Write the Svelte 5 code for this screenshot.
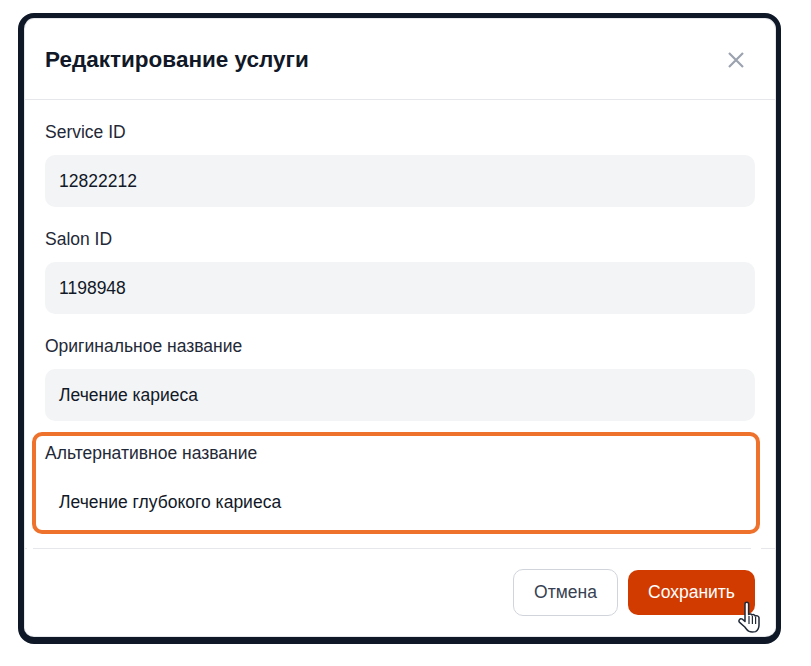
<script>
	const fields = [
		{ label: 'Service ID', value: '12822212' },
		{ label: 'Salon ID', value: '1198948' },
		{ label: 'Оригинальное название', value: 'Лечение кариеса' },
		{ label: 'Альтернативное название', value: 'Лечение глубокого кариеса', plain: true }
	];
</script>

<div class="page">
	<div class="modal">
		<header class="head">
			<h2>Редактирование услуги</h2>
			<button class="close" aria-label="Закрыть">
				<svg width="16" height="16" viewBox="0 0 16 16" fill="none" stroke="#9ca3af" stroke-width="2.2">
					<path d="M1 1L15 15M15 1L1 15" />
				</svg>
			</button>
		</header>

		<div class="body">
			{#each fields as f}
				<div class="field">
					<span class="label">{f.label}</span>
					<div class="input" class:plain={f.plain}>{f.value}</div>
				</div>
			{/each}
			<div class="highlight"></div>
		</div>

		<footer class="foot">
			<button class="btn cancel">Отмена</button>
			<button class="btn save">Сохранить</button>
			<svg class="cursor" width="23" height="32" viewBox="0 0 23 32">
				<path
					d="M7 3C7 0.6 10.6 0.6 10.6 3V13.5C11.6 12.6 13.6 12.8 14 14C15 13.2 16.8 13.6 17.2 15C18.4 14.4 20.8 14.8 21 16.6V24C21 27 19.6 29.4 17.6 30.6C15.4 31.2 12.6 31.2 10.6 30.2C9 29.2 8 27.6 6.8 26L1.6 21.4C0 19.6 1.8 16.8 4.4 18.2L7 20.4Z"
					fill="#fff"
					stroke="#1f2937"
					stroke-width="1.5"
					stroke-linejoin="round"
				/>
				<path d="M11 15V23M14.4 15V23M17.6 16V23" stroke="#1f2937" stroke-width="1.2" fill="none" />
			</svg>
		</footer>
	</div>
</div>

<style>
	:global(body) {
		margin: 0;
		background: #fff;
		font-family: 'Liberation Sans', Arial, sans-serif;
	}
	.page {
		padding: 13px 0 0 18px;
	}
	.modal {
		box-sizing: border-box;
		width: 763px;
		height: 631px;
		border: solid #0f1827;
		border-width: 5px 5px 7px 6px;
		border-radius: 16px;
		background: #fff;
		color: #111827;
		box-shadow: inset 0 0 0 1px #e5e7eb;
	}
	.head {
		display: flex;
		align-items: center;
		justify-content: space-between;
		box-sizing: border-box;
		height: 82px;
		padding: 2px 32px 0 21px;
		border-bottom: 1px solid #e5e7eb;
	}
	h2 {
		margin: 0;
		font-size: 22.5px;
		font-weight: 700;
	}
	.close {
		display: flex;
		padding: 0;
		border: 0;
		background: none;
	}
	.body {
		position: relative;
		display: flex;
		flex-direction: column;
		gap: 20px;
		padding: 20px 21px 0;
	}
	.field {
		display: flex;
		flex-direction: column;
		gap: 10px;
	}
	.label {
		font-size: 17.5px;
		line-height: 25px;
		color: #1f2937;
	}
	.input {
		display: flex;
		align-items: center;
		box-sizing: border-box;
		height: 52px;
		padding: 0 14px;
		border-radius: 10px;
		background: #f3f4f6;
		font-size: 17.5px;
	}
	.input.plain {
		background: #fff;
	}
	.highlight {
		position: absolute;
		left: 8px;
		top: 332px;
		width: 728px;
		height: 102px;
		box-sizing: border-box;
		border: 4px solid #ee722c;
		border-radius: 10px;
	}
	.foot {
		position: relative;
		display: flex;
		justify-content: flex-end;
		align-items: center;
		gap: 10px;
		margin: 20px 0 0;
		padding: 20px 21px 0;
		border-top: 1px solid #e5e7eb;
	}
	/* the two small breaks in the divider */
	.foot::before,
	.foot::after {
		content: '';
		position: absolute;
		top: -1px;
		height: 1px;
		background: #fff;
	}
	.foot::before {
		left: 3px;
		width: 6px;
	}
	.foot::after {
		left: 727px;
		width: 10px;
	}
	.btn {
		box-sizing: border-box;
		border-radius: 10px;
		font-family: inherit;
		font-size: 17.5px;
	}
	.cancel {
		width: 105px;
		height: 47px;
		border: 1px solid #d1d5db;
		background: #fff;
		color: #374151;
	}
	.save {
		width: 127px;
		height: 45px;
		border: 0;
		background: #d13b00;
		color: #fff;
	}
	.cursor {
		position: absolute;
		left: 714px;
		top: 52px;
	}
</style>
